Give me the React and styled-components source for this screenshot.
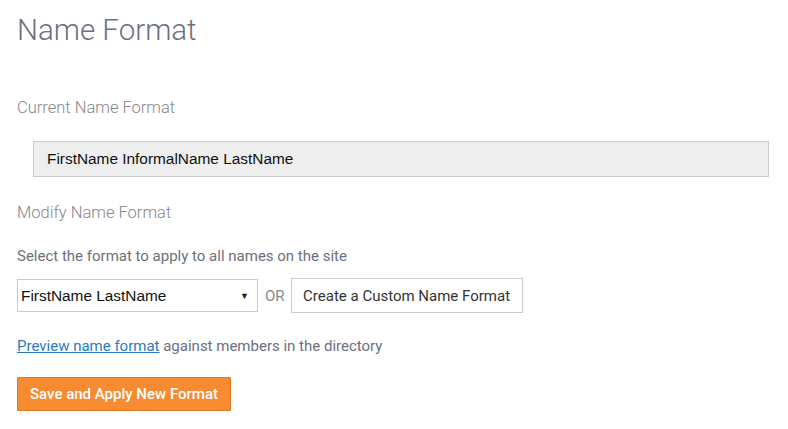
import React, { useState } from "react";
import styled, { createGlobalStyle } from "styled-components";

const GlobalStyle = createGlobalStyle`
	body {
		margin: 0;
		background: #fff;
		font-family: Roboto, "Liberation Sans", sans-serif;
	}
`;

const Page = styled.div`
	display: flex;
	flex-direction: column;
	align-items: flex-start;
	padding: 12px 19px 20px 17px;
`;

const Title = styled.h1`
	margin: 0;
	font-size: 29.5px;
	line-height: 36px;
	font-weight: 300;
	color: #6c7080;
`;

const SectionLabel = styled.div`
	margin-top: ${(p) => p.$top}px;
	font-size: 16.5px;
	line-height: 20px;
	font-weight: 300;
	color: #8a8688;
`;

const CurrentBox = styled.div`
	align-self: stretch;
	margin: 23px 0 0 16px;
	height: 34px;
	padding-left: 13px;
	display: flex;
	align-items: center;
	background: #eeeeee;
	border: 1px solid #cccccc;
	font-family: "Liberation Sans", Arial, sans-serif;
	font-size: 15.4px;
	color: #111;
`;

const Hint = styled.div`
	margin-top: ${(p) => p.$top ?? 24}px;
	font-size: 15px;
	line-height: 18px;
	color: #6c7080;
`;

const Row = styled.div`
	margin-top: 13px;
	display: flex;
	align-items: center;
	gap: 6px;
`;

const SelectWrap = styled.div`
	position: relative;
	width: 241px;
	height: 33px;
`;

const Select = styled.select`
	appearance: none;
	width: 100%;
	height: 100%;
	margin: 0;
	padding: 0 20px 0 3px;
	background: #fff;
	border: 1px solid #cccccc;
	border-radius: 0;
	font-family: "Liberation Sans", Arial, sans-serif;
	font-size: 15.4px;
	color: #111;
	outline: none;
`;

const Arrow = styled.span`
	position: absolute;
	right: 9px;
	top: 12px;
	font-size: 9px;
	line-height: 10px;
	color: #222;
	pointer-events: none;
`;

const Or = styled.span`
	margin-left: 1px;
	font-size: 15px;
	color: #8a8a8a;
`;

const PlainButton = styled.button`
	height: 35px;
	width: 232px;
	padding: 0;
	background: #fff;
	border: 1px solid #cccccc;
	border-radius: 0;
	font-family: Roboto, "Liberation Sans", sans-serif;
	font-size: 15px;
	color: #333;
	cursor: pointer;
`;

const Link = styled.a`
	color: #2a7bc0;
	text-decoration: underline;
`;

const SaveButton = styled.button`
	margin-top: 22px;
	height: 34px;
	width: 214px;
	padding: 0;
	background: #f78b32;
	border: 1px solid #e27822;
	border-radius: 1px;
	font-family: Roboto, "Liberation Sans", sans-serif;
	font-size: 15px;
	font-weight: 500;
	color: #fff;
	cursor: pointer;
`;

const formats = [
	"FirstName LastName",
	"FirstName InformalName LastName",
	"LastName, FirstName",
	"InformalName LastName",
];

// 이름 형식 설정 페이지
const App = () => {
	const [format, setFormat] = useState(formats[0]); // 선택한 형식

	return (
		<Page>
			<GlobalStyle />
			<Title>Name Format</Title>

			<SectionLabel $top={50}>Current Name Format</SectionLabel>
			<CurrentBox>FirstName InformalName LastName</CurrentBox>

			<SectionLabel $top={26}>Modify Name Format</SectionLabel>
			<Hint>Select the format to apply to all names on the site</Hint>

			<Row>
				<SelectWrap>
					<Select value={format} onChange={(e) => setFormat(e.target.value)}>
						{formats.map((f) => (
							<option key={f} value={f}>
								{f}
							</option>
						))}
					</Select>
					<Arrow>▼</Arrow>
				</SelectWrap>
				<Or>OR</Or>
				<PlainButton>Create a Custom Name Format</PlainButton>
			</Row>

			<Hint $top={24}>
				<Link href="#">Preview name format</Link> against members in the
				directory
			</Hint>

			<SaveButton>Save and Apply New Format</SaveButton>
		</Page>
	);
};

export default App;
